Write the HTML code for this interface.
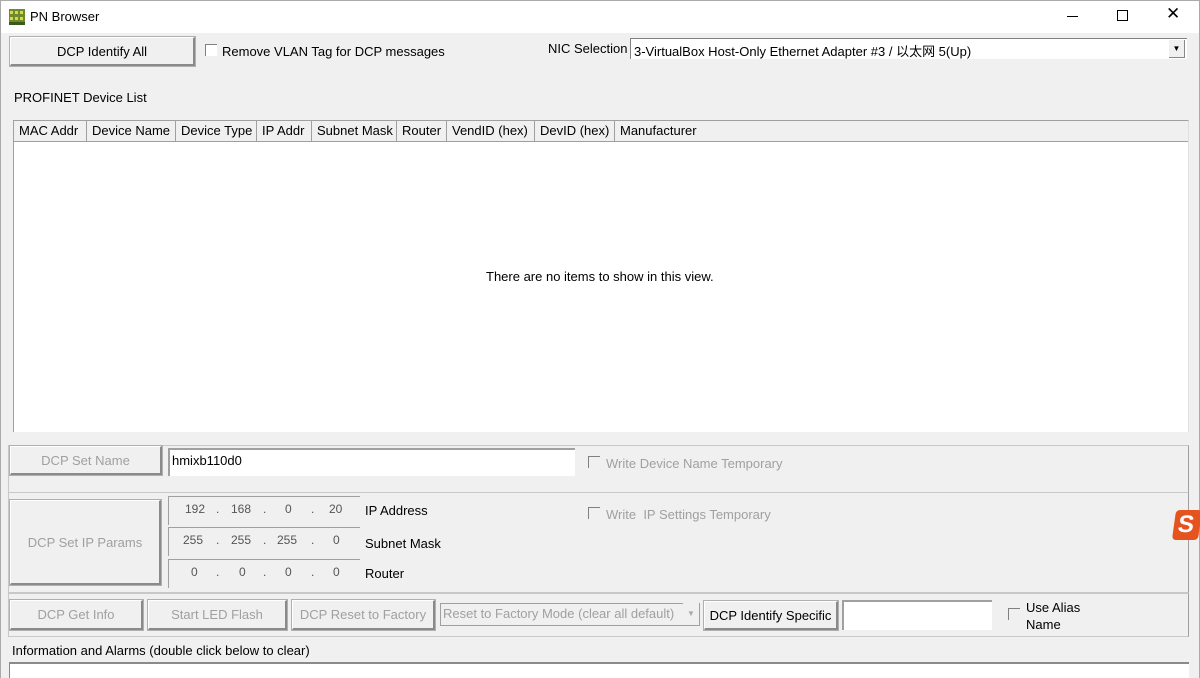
<!DOCTYPE html>
<html><head><meta charset="utf-8"><style>
*{box-sizing:border-box;margin:0;padding:0}
body{width:1200px;height:678px;overflow:hidden;background:#f0f0f0;font-family:"Liberation Sans","Noto Sans CJK SC",sans-serif;font-size:13px;color:#000;position:relative}
.a{position:absolute;white-space:nowrap}
.btn{position:absolute;background:#f0f0f0;border:1px solid #fff;border-right:2px solid #8a8a8a;border-bottom:2px solid #8a8a8a;outline:1px solid #b0b0b0;display:flex;align-items:center;justify-content:center}
.dis{color:#a0a0a0}
.cb{position:absolute;width:12px;height:12px;border-top:1px solid #808080;border-left:1px solid #808080;background:#fff}
.grp{position:absolute;left:8px;width:1181px;border:1px solid #c8c8c8;border-right-color:#a0a0a0}
.hdr{position:absolute;top:0;height:21px;border-right:1px solid #a0a0a0;padding-left:5px;line-height:20px}
.ip{position:absolute;left:168px;width:192px;height:29px;border-top:1px solid #a0a0a0;border-left:1px solid #a0a0a0;color:#555;font-size:12px}
.ip span{position:absolute;top:5px}
</style></head><body>
<div class="a" style="left:0;top:0;width:1200px;height:33px;background:#fff;border:1px solid #aaa;border-bottom:none"></div>
<svg class="a" style="left:9px;top:9px" width="16" height="16"><rect width="16" height="16" fill="#6b8c2c"/><rect x="1" y="2" width="3" height="3" fill="#e8d04a"/><rect x="6" y="2" width="3" height="3" fill="#e8d04a"/><rect x="11" y="2" width="3" height="3" fill="#e8d04a"/><rect x="1" y="8" width="3" height="3" fill="#e8d04a"/><rect x="6" y="8" width="3" height="3" fill="#e8d04a"/><rect x="11" y="8" width="3" height="3" fill="#e8d04a"/><rect y="13" width="16" height="3" fill="#3a5a1a"/></svg>
<div class="a" style="left:30px;top:9px;font-size:13px">PN Browser</div>
<div class="a" style="left:1067px;top:16px;width:11px;height:1px;background:#000"></div>
<div class="a" style="left:1117px;top:10px;width:11px;height:11px;border:1px solid #000"></div>
<div class="a" style="left:1166px;top:4px;font-size:17px;font-weight:300">✕</div>
<div class="a" style="left:0;top:33px;width:1px;height:645px;background:#aaa"></div>
<div class="a" style="left:1199px;top:33px;width:1px;height:645px;background:#aaa"></div>

<div class="btn" style="left:10px;top:37px;width:185px;height:29px">DCP Identify All</div>
<div class="cb" style="left:205px;top:44px"></div>
<div class="a" style="left:222px;top:44px">Remove VLAN Tag for DCP messages</div>
<div class="a" style="left:548px;top:41px">NIC Selection</div>
<div class="a" style="left:630px;top:38px;width:557px;height:21px;background:#fff;border-top:1px solid #808080;border-left:1px solid #808080;padding:2px 3px">3-VirtualBox Host-Only Ethernet Adapter #3 / 以太网 5(Up)</div>
<div class="a" style="left:1169px;top:40px;width:16px;height:18px;background:#f0f0f0;border-right:1px solid #888;border-bottom:1px solid #888;font-size:8px;text-align:center;line-height:18px">▼</div>

<div class="a" style="left:14px;top:90px">PROFINET Device List</div>
<div class="a" style="left:13px;top:120px;width:1176px;height:312px;background:#fff;border:1px solid #a0a0a0;border-right-color:#e0e0e0;border-bottom:none">
<div class="a" style="left:0;top:0;width:1174px;height:21px;background:#f0f0f0;border-bottom:1px solid #a0a0a0"></div>
<div class="hdr" style="left:0;width:73px">MAC Addr</div>
<div class="hdr" style="left:73px;width:89px">Device Name</div>
<div class="hdr" style="left:162px;width:81px">Device Type</div>
<div class="hdr" style="left:243px;width:55px">IP Addr</div>
<div class="hdr" style="left:298px;width:85px">Subnet Mask</div>
<div class="hdr" style="left:383px;width:50px">Router</div>
<div class="hdr" style="left:433px;width:88px">VendID (hex)</div>
<div class="hdr" style="left:521px;width:80px">DevID (hex)</div>
<div class="hdr" style="left:601px;width:573px;border-right:none">Manufacturer</div>
<div class="a" style="left:472px;top:148px">There are no items to show in this view.</div>
</div>

<div class="grp" style="top:445px;height:48px"></div>
<div class="grp" style="top:492px;height:101px"></div>
<div class="grp" style="top:593px;height:44px"></div>

<div class="btn dis" style="left:10px;top:446px;width:152px;height:29px">DCP Set Name</div>
<div class="a" style="left:168px;top:448px;width:407px;height:28px;background:#fff;border-top:2px solid #a0a0a0;border-left:2px solid #a0a0a0;padding:3px 2px">hmixb110d0</div>
<div class="cb" style="left:588px;top:456px;background:#f0f0f0"></div>
<div class="a dis" style="left:606px;top:456px">Write Device Name Temporary</div>

<div class="btn dis" style="left:10px;top:500px;width:151px;height:85px">DCP Set IP Params</div>
<div class="ip" style="top:496px"><span style="left:16px">192</span><span style="left:47px">.</span><span style="left:62px">168</span><span style="left:94px">.</span><span style="left:116px">0</span><span style="left:142px">.</span><span style="left:160px">20</span></div>
<div class="ip" style="top:527px"><span style="left:14px">255</span><span style="left:47px">.</span><span style="left:62px">255</span><span style="left:94px">.</span><span style="left:108px">255</span><span style="left:142px">.</span><span style="left:164px">0</span></div>
<div class="ip" style="top:559px"><span style="left:22px">0</span><span style="left:47px">.</span><span style="left:70px">0</span><span style="left:94px">.</span><span style="left:116px">0</span><span style="left:142px">.</span><span style="left:164px">0</span></div>
<div class="a" style="left:365px;top:503px">IP Address</div>
<div class="a" style="left:365px;top:536px">Subnet Mask</div>
<div class="a" style="left:365px;top:566px">Router</div>
<div class="cb" style="left:588px;top:507px;background:#f0f0f0"></div>
<div class="a dis" style="left:606px;top:507px">Write&nbsp; IP Settings Temporary</div>
<div class="a" style="left:1174px;top:510px;width:26px;height:30px;background:#e5531f;border-radius:4px;transform:skew(-8deg);color:#fff;font-weight:bold;font-size:24px;line-height:30px;padding-left:4px">S</div>

<div class="btn dis" style="left:10px;top:600px;width:133px;height:30px">DCP Get Info</div>
<div class="btn dis" style="left:148px;top:600px;width:139px;height:30px">Start LED Flash</div>
<div class="btn dis" style="left:292px;top:600px;width:143px;height:30px">DCP Reset to Factory</div>
<div class="a dis" style="left:440px;top:603px;width:260px;height:23px;border:1px solid #a0a0a0;padding:2px 2px;overflow:hidden">Reset to Factory Mode (clear all default)</div>
<div class="a" style="left:683px;top:603px;width:16px;height:21px;background:#f0f0f0;font-size:8px;color:#aaa;text-align:center;line-height:21px">▼</div>
<div class="btn" style="left:704px;top:601px;width:134px;height:29px">DCP Identify Specific</div>
<div class="a" style="left:842px;top:600px;width:150px;height:30px;background:#fff;border-top:2px solid #a0a0a0;border-left:2px solid #a0a0a0"></div>
<div class="cb" style="left:1008px;top:608px;background:#f0f0f0"></div>
<div class="a" style="left:1026px;top:599px;line-height:17px">Use Alias<br>Name</div>

<div class="a" style="left:12px;top:643px">Information and Alarms (double click below to clear)</div>
<div class="a" style="left:9px;top:662px;width:1180px;height:16px;background:#fff;border-top:2px solid #8a8a8a;border-left:1px solid #8a8a8a"></div>
</body></html>
